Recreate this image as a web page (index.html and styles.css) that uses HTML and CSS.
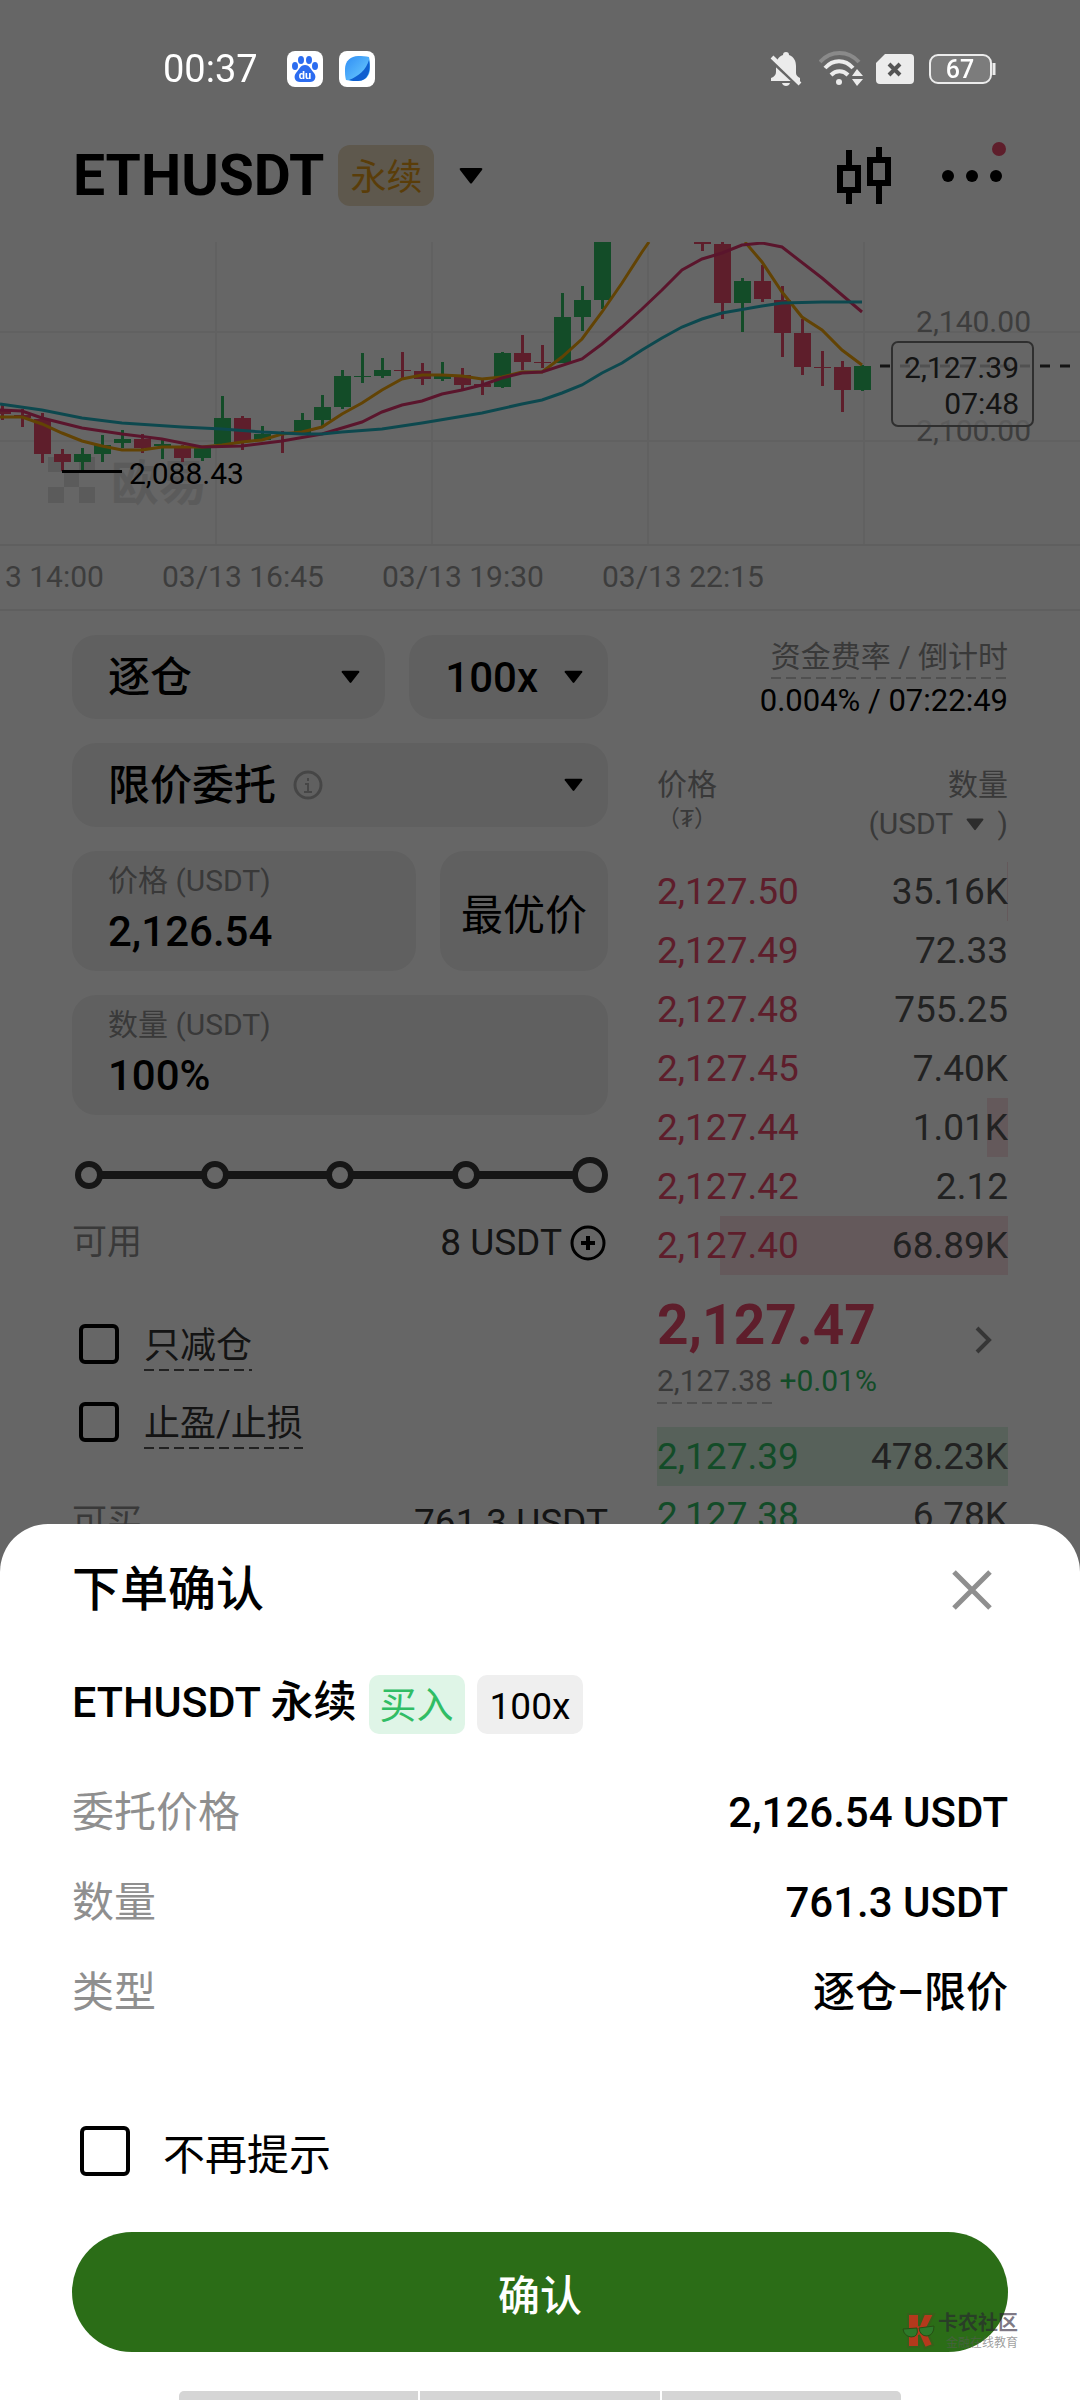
FILE: index.html
```html
<!DOCTYPE html>
<html lang="zh-CN">
<head>
    <meta charset="UTF-8">
    <meta name="viewport" content="width=device-width, initial-scale=1.0">
    <title>ETHUSDT 永续</title>
    <link rel="stylesheet" href="styles.css">
</head>
<body>
    <div class="status-bar">
        <span class="clock">00:37</span>
        <svg class="app-icon" width="36" height="36" viewBox="0 0 36 36">
            <rect width="36" height="36" rx="8" fill="#fff"/>
            <g fill="#2c6cf0">
                <ellipse cx="14" cy="9" rx="3" ry="4"/>
                <ellipse cx="22" cy="9" rx="3" ry="4"/>
                <ellipse cx="8" cy="15" rx="3" ry="4"/>
                <ellipse cx="28" cy="15" rx="3" ry="4"/>
                <path d="M18 14c-5 0-6 5-9 8-3 4-1 9 4 9h10c5 0 7-5 4-9-3-3-4-8-9-8z"/>
            </g>
            <text x="18" y="28" text-anchor="middle" class="du">du</text>
        </svg>
        <svg class="app-icon" width="36" height="36" viewBox="0 0 36 36">
            <defs>
                <linearGradient id="leaf" x1="0" y1="0" x2="1" y2="1">
                    <stop offset="0" stop-color="#2f8df5"/>
                    <stop offset="1" stop-color="#6fd0ff"/>
                </linearGradient>
            </defs>
            <rect width="36" height="36" rx="8" fill="#fff"/>
            <path d="M6 18C6 10 12 5 19 5c4 0 8 0 11 1 1 4 1 8 1 12 0 7-5 12-12 12-4 0-8 0-12-1-1-3-1-7-1-11z" fill="url(#leaf)"/>
            <path d="M10 29c10-4 17-10 20-20 2 9 0 21-11 21-4 0-6 0-9-1z" fill="#0f5fd0"/>
        </svg>
        <div class="status-right">
            <svg width="32" height="36" viewBox="0 0 32 36" fill="#ececec">
                <path d="M16 1c2 0 3 1 3 3 5 2 7 6 7 11v7q0 3 4 5v3H1v-3q5-2 5-6v-6c0-5 2-9 7-11 0-2 1-3 3-3z"/>
                <path d="M12 32h8c-1 4-7 4-8 0z"/>
                <path d="M1 9l28 26" stroke="#666" stroke-width="4"/>
                <path d="M2 6l28 27" stroke="#ececec" stroke-width="4"/>
            </svg>
            <svg class="wifi" width="44" height="36" viewBox="0 0 44 36" fill="none" stroke="#ececec" stroke-width="4">
                <path d="M1 11c11-12 28-12 39 0" stroke="#8a8a8a"/>
                <path d="M6 17c8-9 20-9 28 0"/>
                <path d="M12 24c5-5 12-5 17 0"/>
                <circle cx="20" cy="31" r="3" fill="#ececec" stroke="none"/>
                <path d="M38 18l6 7H33zM38 35l6-7H33z" fill="#ececec" stroke="none"/>
            </svg>
            <svg class="sim" width="38" height="30" viewBox="0 0 38 30">
                <path d="M9 0h25a4 4 0 0 1 4 4v22a4 4 0 0 1-4 4H4a4 4 0 0 1-4-4V9z" fill="#ececec"/>
                <path d="M13 10l11 11M24 10L13 21" stroke="#555" stroke-width="4"/>
            </svg>
            <svg width="68" height="30" viewBox="0 0 68 30">
                <rect x="1" y="1" width="61" height="28" rx="8" fill="#7c7c7c" stroke="#ececec" stroke-width="2"/>
                <path d="M65 9v12" stroke="#ececec" stroke-width="3"/>
                <text x="31" y="24" text-anchor="middle" class="battery-text">67</text>
            </svg>
        </div>
    </div>

    <div class="app">
        <header class="header">
            <h1 class="symbol">ETHUSDT</h1>
            <span class="tag-perp">永续</span>
            <svg class="arrow-lg" width="24" height="16" viewBox="0 0 24 16"><path d="M2 0h20q2 0 1 2L13 15q-1 1-2 0L1 2q-1-2 1-2z"/></svg>
            <div class="header-tools">
                <button class="icon-btn" aria-label="K线">
                    <svg width="54" height="57" viewBox="0 0 54 57" fill="none" stroke="#000" stroke-width="6">
                        <rect x="3" y="21" width="18" height="22"/>
                        <rect x="33" y="13" width="18" height="23"/>
                        <path d="M12 3v18M12 44v13M42 0v13M42 37v20"/>
                    </svg>
                </button>
                <button class="icon-btn more" aria-label="更多">
                    <svg width="60" height="12" viewBox="0 0 60 12"><circle cx="6" cy="6" r="6"/><circle cx="30" cy="6" r="6"/><circle cx="54" cy="6" r="6"/></svg>
                    <i class="dot"></i>
                </button>
            </div>
        </header>

        <svg class="chart" viewBox="0 0 1080 302">
            <path class="grid" d="M0 90H1080M0 199H1080M216 0V302M432 0V302M648 0V302M864 0V302"/>
            <g fill="#e4e4e4">
                <path d="M48 215h16v15h15v-15h16v15H79v15h16v16H79v-16H64v16H48v-16h16v-15H48z"/>
                <text x="111" y="258" class="brand">欧易</text>
            </g>
            <g id="candles"></g>
            <polyline class="ma" stroke="#f5a70a" points="0,175 22,175 42,182 62,191 82,199 102,204 122,208 142,208 162,205 202,205 222,203 242,200 262,198 282,192 302,190 322,185 342,172 362,161 382,148 402,137 422,133 442,133 462,134 482,137 502,135 522,130 542,130 562,115 582,97 602,70 622,41 642,10 649,0"/>
            <polyline class="ma" stroke="#f5a70a" points="745,0 762,20 782,50 802,75 822,88 842,108 862,123"/>
            <polyline class="ma" stroke="#e0366f" points="0,168 22,169 42,176 82,186 122,192 162,197 202,205 242,204 282,199 322,192 342,186 362,180 382,170 402,163 422,159 442,152 462,148 482,143 502,136 522,131 542,130 582,117 602,102 622,85 642,67 662,48 682,28 702,17 722,11 742,3 762,1 782,5 822,36 862,70"/>
            <polyline class="ma" stroke="#22b5c4" points="0,162 42,168 82,176 122,181 182,185 222,187 262,190 302,192 322,192 342,190 382,187 422,181 482,171 522,162 542,158 562,151 582,143 602,131 622,121 642,108 662,96 682,85 702,77 722,71 762,64 782,61 822,60 862,60"/>
            <path d="M62 229.500H122" stroke="#000" stroke-width="3"/>
            <text x="129" y="242" class="low">2,088.43</text>
            <text x="1031" y="90" class="scale">2,140.00</text>
            <text x="1031" y="199" class="scale">2,100.00</text>
            <path d="M880 124H1080" stroke="#333" stroke-width="3" stroke-dasharray="10 10"/>
            <rect x="892" y="100" width="141" height="84" rx="6" class="price-box"/>
            <text x="1019" y="136" class="now">2,127.39</text>
            <text x="1019" y="172" class="now">07:48</text>
        </svg>
        <div class="time-axis">
            <span>03/13 14:00</span>
            <span>03/13 16:45</span>
            <span>03/13 19:30</span>
            <span>03/13 22:15</span>
        </div>

        <main class="trade">
            <form class="order-form">
                <div class="row">
                    <div class="select-box mode">
                        <select aria-label="保证金模式"><option>逐仓</option></select>
                        <svg class="arrow" width="19" height="14" viewBox="0 0 24 16"><path d="M2 0h20q2 0 1 2L13 15q-1 1-2 0L1 2q-1-2 1-2z"/></svg>
                    </div>
                    <div class="select-box lever">
                        <select aria-label="杠杆"><option>100x</option></select>
                        <svg class="arrow" width="19" height="14" viewBox="0 0 24 16"><path d="M2 0h20q2 0 1 2L13 15q-1 1-2 0L1 2q-1-2 1-2z"/></svg>
                    </div>
                </div>
                <div class="select-box type">
                    <select aria-label="委托类型"><option>限价委托</option></select>
                    <svg class="info" width="30" height="30" viewBox="0 0 30 30" fill="none" stroke="#b0b0b0" stroke-width="3"><circle cx="15" cy="15" r="13"/><path d="M15 8v3M12 14h3v8M11 22h8" stroke-width="2"/></svg>
                    <svg class="arrow" width="19" height="14" viewBox="0 0 24 16"><path d="M2 0h20q2 0 1 2L13 15q-1 1-2 0L1 2q-1-2 1-2z"/></svg>
                </div>
                <div class="row">
                    <label class="field">价格 (USDT)<input type="text" value="2,126.54"></label>
                    <button type="button" class="best-btn">最优价</button>
                </div>
                <label class="field">数量 (USDT)<input type="text" value="100%"></label>
                <div class="slider">
                    <div class="ticks"><i></i><i></i><i></i><i></i><i></i></div>
                    <input type="range" min="0" max="100" step="25" value="100" aria-label="仓位比例">
                </div>
                <div class="balance avail">
                    <span>可用</span>
                    <b>8 USDT</b>
                    <button type="button" class="icon-btn" aria-label="划转">
                        <svg width="36" height="36" viewBox="0 0 36 36" fill="none" stroke="#000" stroke-width="3"><circle cx="18" cy="18" r="16"/><path d="M18 11v14M11 18h14" stroke-width="4"/></svg>
                    </button>
                </div>
                <div class="checks">
                    <label class="check"><input type="checkbox"><span class="dashed">只减仓</span></label>
                    <label class="check"><input type="checkbox"><span class="dashed">止盈/止损</span></label>
                </div>
                <div class="balance">
                    <span>可买</span>
                    <b>761.3 USDT</b>
                </div>
            </form>

            <section class="book">
                <div class="funding">
                    <span class="dashed light">资金费率 / 倒计时</span>
                    <span class="rate">0.004% / 07:22:49</span>
                </div>
                <table class="asks">
                    <thead>
                        <tr>
                            <th>价格<div class="unit">（₮）</div></th>
                            <th>数量<br>(USDT <svg width="18" height="13" viewBox="0 0 24 16" fill="#707070"><path d="M2 0h20q2 0 1 2L13 15q-1 1-2 0L1 2q-1-2 1-2z"/></svg> )</th>
                        </tr>
                    </thead>
                    <tbody>
                        <tr style="--depth: 1px"><td>2,127.50</td><td>35.16K</td></tr>
                        <tr><td>2,127.49</td><td>72.33</td></tr>
                        <tr><td>2,127.48</td><td>755.25</td></tr>
                        <tr><td>2,127.45</td><td>7.40K</td></tr>
                        <tr style="--depth: 6%"><td>2,127.44</td><td>1.01K</td></tr>
                        <tr><td>2,127.42</td><td>2.12</td></tr>
                        <tr style="--depth: 82%"><td>2,127.40</td><td>68.89K</td></tr>
                    </tbody>
                </table>
                <div class="last">
                    <div>
                        <div class="last-price">2,127.47</div>
                        <div class="mark"><span class="dashed light">2,127.38</span> <span class="up">+0.01%</span></div>
                    </div>
                    <svg class="chevron" width="20" height="28" viewBox="0 0 20 28" fill="none" stroke="#888" stroke-width="4"><path d="M3 2l12 12L3 26"/></svg>
                </div>
                <table class="bids">
                    <tbody>
                        <tr style="--depth: 100%"><td>2,127.39</td><td>478.23K</td></tr>
                        <tr><td>2,127.38</td><td>6.78K</td></tr>
                    </tbody>
                </table>
            </section>
        </main>
    </div>

    <div class="mask"></div>

    <div class="sheet" role="dialog" aria-labelledby="sheetTitle">
        <div class="sheet-head">
            <h2 id="sheetTitle">下单确认</h2>
            <button class="icon-btn close" aria-label="关闭">
                <svg width="40" height="40" viewBox="0 0 40 40" stroke="#8f8f8f" stroke-width="5"><path d="M2 2l36 36M38 2L2 38"/></svg>
            </button>
        </div>
        <div class="pair">
            <span class="pair-name">ETHUSDT 永续</span>
            <span class="tag buy">买入</span>
            <span class="tag">100x</span>
        </div>
        <dl class="detail">
            <div><dt>委托价格</dt><dd>2,126.54 USDT</dd></div>
            <div><dt>数量</dt><dd>761.3 USDT</dd></div>
            <div><dt>类型</dt><dd>逐仓–限价</dd></div>
        </dl>
        <label class="check no-remind"><input type="checkbox">不再提示</label>
        <button class="confirm">确认</button>
        <div class="home-bar"><i></i><i></i><i></i></div>
        <div class="community">
            <svg width="34" height="38" viewBox="0 0 34 38">
                <path d="M6 2h11v12l5-12h10l-8 16 7 15-8 3-6-13v12H6z" fill="#b5391c" stroke="#35611a" stroke-width="2"/>
                <path d="M1 17l14-1q2 9-6 9-7-1-8-8zM17 16l15-2q0 9-7 10-7 0-8-8z" fill="#2d7a2a" stroke="#274f14"/>
            </svg>
            <div>
                <div class="community-name">卡农社区</div>
                <div class="community-sub">金融在线教育</div>
            </div>
        </div>
    </div>

    <script>
        // [序号, 最高, 最低, 实体上, 实体下, 1涨 0跌]
        const data = [
            [0, 162, 178, 167, 172, 0], [1, 167, 185, 173, 176, 0], [2, 171, 221, 177, 212, 0],
            [3, 207, 229, 212, 220, 0], [4, 206, 229, 212, 220, 1], [5, 193, 220, 203, 212, 1],
            [6, 188, 206, 197, 201, 1], [7, 192, 211, 197, 206, 0], [8, 198, 217, 202, 204, 1],
            [9, 203, 220, 205, 216, 0], [10, 205, 219, 205, 216, 1], [11, 154, 204, 176, 202, 1],
            [12, 174, 208, 176, 200, 0], [13, 184, 199, 192, 198, 1], [14, 189, 211, 191, 192, 0],
            [15, 171, 192, 178, 191, 1], [16, 153, 184, 165, 178, 1], [17, 128, 167, 134, 165, 1],
            [18, 111, 141, 134, 135, 1], [19, 116, 136, 128, 134, 1], [20, 110, 136, 128, 129, 0],
            [21, 121, 143, 129, 137, 0], [22, 120, 139, 133, 137, 1], [23, 126, 148, 133, 143, 0],
            [24, 138, 153, 142, 145, 0], [25, 110, 146, 111, 145, 1], [26, 93, 128, 111, 120, 0],
            [27, 103, 126, 120, 121, 0], [28, 51, 121, 75, 121, 1], [29, 44, 89, 58, 75, 1],
            [30, 0, 67, 0, 58, 1], [35, 0, 9, 0, 2, 0], [36, 0, 77, 2, 61, 0],
            [37, 36, 90, 39, 61, 1], [38, 23, 60, 39, 57, 0], [39, 44, 115, 58, 91, 0],
            [40, 77, 133, 91, 125, 0], [41, 109, 144, 125, 126, 0], [42, 119, 170, 125, 148, 0],
            [43, 123, 149, 124, 148, 1]
        ];
        document.getElementById('candles').innerHTML = data.map(([n, high, low, top, bottom, up]) => {
            const x = 2 + n * 20;
            return `<g class="${up ? 'rise' : 'fall'}">
                <rect x="${x - 1}" y="${high}" width="3" height="${low - high}"/>
                <rect x="${x - 8}" y="${top}" width="17" height="${bottom - top}"/>
            </g>`;
        }).join('');
    </script>
</body>
</html>
```

FILE: styles.css
```css
* {
    box-sizing: border-box;
}
body {
    margin: 0;
    background-color: #fff;
    color: #000;
    font-family: Roboto, "Noto Sans CJK SC", sans-serif;
    font-size: 36px;
}
h1, h2, dl, dd {
    margin: 0;
}
button, input, select {
    font-family: inherit;
    color: inherit;
}
svg {
    display: block;
}
.icon-btn {
    position: relative;
    padding: 0;
    border: none;
    background: none;
    cursor: pointer;
}

/* 状态栏 */
.status-bar {
    position: fixed;
    top: 0;
    left: 0;
    right: 0;
    z-index: 3;
    display: flex;
    align-items: center;
    height: 138px;
    padding: 0 83px 0 163px;
    color: #fff;
}
.clock {
    font-size: 38px;
    margin-right: 29px;
}
.app-icon {
    margin-right: 16px;
}
.du {
    font-size: 11px;
    font-weight: 700;
    fill: #fff;
}
.status-right {
    display: flex;
    align-items: center;
    margin-left: auto;
}
.wifi {
    margin-left: 17px;
}
.sim {
    margin: 0 15px 0 13px;
}
.battery-text {
    font-size: 25px;
    font-weight: 500;
    fill: #fff;
}

.app {
    height: 100vh;
    padding-top: 138px;
    overflow: hidden;
}
.header {
    display: flex;
    align-items: center;
    height: 104px;
    padding: 0 78px 29px 73px;
}
.symbol {
    font-size: 57px;
    line-height: 75px;
    font-weight: 700;
}
.tag-perp {
    height: 61px;
    margin: 0 25px 0 14px;
    padding: 0 12px;
    border-radius: 12px;
    background-color: #eadcc0;
    color: #e09a18;
    line-height: 66px;
}
.header-tools {
    display: flex;
    align-items: center;
    gap: 51px;
    margin-left: auto;
}
.dot {
    position: absolute;
    top: -28px;
    right: -4px;
    width: 14px;
    height: 14px;
    border-radius: 50%;
    background-color: #eb4b6d;
}

/* K线 */
.chart {
    width: 100%;
    font-size: 30px;
}
.grid {
    fill: none;
    stroke: #f3f3f3;
    stroke-width: 2;
}
.rise {
    fill: #31bd65;
}
.fall {
    fill: #eb4b6d;
}
.ma {
    fill: none;
    stroke-width: 3;
}
.brand {
    font-size: 48px;
    font-weight: 700;
}
.scale {
    text-anchor: end;
    fill: #9a9a9a;
}
.price-box {
    fill: rgba(255, 255, 255, 0.75);
    stroke: #777;
    stroke-width: 2;
}
.now {
    text-anchor: end;
    fill: #333;
}
.time-axis {
    display: flex;
    gap: 58px;
    height: 67px;
    padding-bottom: 2px;
    overflow: hidden;
    border-top: 2px solid #eee;
    border-bottom: 2px solid #eee;
    color: #9a9a9a;
    font-size: 30px;
    line-height: 62px;
    white-space: nowrap;
}
.time-axis span {
    flex: none;
}
.time-axis span:first-child {
    margin-left: -58px;
}

/* 下单区 */
.trade {
    display: grid;
    grid-template-columns: minmax(0, 1fr) 351px;
    gap: 49px;
    padding: 24px 72px 0;
}
.order-form {
    display: flex;
    flex-direction: column;
    gap: 24px;
}
.row {
    display: flex;
    gap: 24px;
}
.select-box {
    display: flex;
    align-items: center;
    height: 84px;
    padding: 0 25px 0 36px;
    border-radius: 24px;
    background-color: #f1f1f1;
}
.mode {
    flex: 11;
}
.lever {
    flex: 6;
}
.select-box select {
    padding: 0;
    border: none;
    background: none;
    appearance: none;
    font-size: 42px;
    font-weight: 500;
}
.info {
    margin-left: 16px;
}
.arrow {
    margin-left: auto;
}
.field {
    flex: 1;
    min-width: 0;
    height: 120px;
    padding: 10px 36px;
    border-radius: 24px;
    background-color: #f1f1f1;
    color: #8f8f8f;
    font-size: 30px;
    line-height: 40px;
}
.order-form > .field {
    flex: none;
}
.field input {
    display: block;
    width: 100%;
    height: 60px;
    padding: 0;
    border: none;
    background: none;
    color: #000;
    font-size: 42px;
    font-weight: 500;
}
.best-btn {
    width: 168px;
    padding: 0;
    border: none;
    border-radius: 24px;
    background-color: #f1f1f1;
    font-size: 42px;
}
.slider {
    position: relative;
    height: 36px;
    margin-top: 18px;
}
.slider::before {
    content: "";
    position: absolute;
    top: 14px;
    left: 17px;
    right: 17px;
    height: 8px;
    background-color: #383838;
}
.ticks {
    position: absolute;
    inset: 4px 3px;
    display: flex;
    justify-content: space-between;
}
.ticks i {
    width: 28px;
    height: 28px;
    border: 6px solid #383838;
    border-radius: 50%;
    background-color: #fff;
}
.slider input {
    position: absolute;
    inset: 0;
    width: 100%;
    height: 36px;
    margin: 0;
    background: none;
    appearance: none;
}
.slider input::-webkit-slider-thumb {
    width: 36px;
    height: 36px;
    border: 6px solid #383838;
    border-radius: 50%;
    background-color: #fff;
    appearance: none;
}
.balance {
    display: flex;
    align-items: center;
    height: 44px;
    line-height: 44px;
}
.balance span {
    margin-right: auto;
    color: #8f8f8f;
    font-size: 35px;
}
.balance b {
    color: #333;
    font-size: 37px;
    font-weight: 400;
}
.avail {
    margin-top: 4px;
    padding-right: 2px;
}
.avail button {
    margin-left: 8px;
}
.checks {
    display: flex;
    flex-direction: column;
    gap: 24px;
    margin: 28px 0;
}
.check {
    display: flex;
    align-items: center;
}
.check input {
    width: 40px;
    height: 40px;
    margin: 0 25px 0 7px;
    border: 4px solid #000;
    border-radius: 6px;
    appearance: none;
}
.checks span {
    height: 54px;
    color: #333;
    line-height: 58px;
}
.dashed {
    background: repeating-linear-gradient(90deg, #555 0 10px, transparent 10px 15px) left bottom / 100% 2px no-repeat;
}
.dashed.light {
    background-image: repeating-linear-gradient(90deg, #c8c8c8 0 10px, transparent 10px 15px);
    color: #8f8f8f;
}

/* 盘口 */
.book {
    font-size: 30px;
}
.funding {
    display: flex;
    flex-direction: column;
    align-items: flex-end;
    line-height: 44px;
}
.rate {
    font-size: 31px;
}
.book table {
    width: 100%;
    border-collapse: collapse;
}
.asks {
    margin-top: 42px;
}
th {
    padding: 0 0 19px;
    color: #8f8f8f;
    font-weight: 400;
    line-height: 39px;
    text-align: left;
    vertical-align: top;
}
th svg {
    display: inline-block;
    margin: 0 6px;
    vertical-align: 3px;
}
.unit {
    font-size: 23px;
    line-height: 32px;
}
th:last-child, td:last-child {
    text-align: right;
}
tbody tr {
    background: linear-gradient(#fbdfe4, #fbdfe4) right / var(--depth, 0) 100% no-repeat;
}
.bids tr {
    background-image: linear-gradient(#d9f3e1, #d9f3e1);
}
td {
    height: 59px;
    padding: 0;
    color: #555;
    font-size: 37px;
    line-height: 59px;
}
td:first-child {
    color: #eb4b6d;
}
.bids td:first-child {
    color: #31bd65;
}
.last {
    display: flex;
    align-items: flex-start;
    justify-content: space-between;
    padding: 20px 14px 23px 0;
}
.chevron {
    margin-top: 31px;
}
.last-price {
    color: #eb4b6d;
    font-size: 55px;
    font-weight: 700;
    line-height: 60px;
}
.mark {
    margin-top: 3px;
    line-height: 46px;
}
.mark .dashed {
    display: inline-block;
}
.up {
    color: #31bd65;
}

.mask {
    position: fixed;
    inset: 0;
    z-index: 1;
    background-color: rgba(0, 0, 0, 0.6);
}

/* 确认弹层 */
.sheet {
    position: fixed;
    left: 0;
    right: 0;
    bottom: 0;
    z-index: 2;
    padding: 38px 72px 0;
    border-radius: 48px 48px 0 0;
    background-color: #fff;
    font-size: 42px;
}
.sheet-head {
    display: flex;
    align-items: center;
    justify-content: space-between;
    height: 56px;
    padding-right: 16px;
}
.sheet-head h2 {
    font-size: 48px;
    font-weight: 500;
    line-height: 52px;
}
.pair {
    display: flex;
    align-items: center;
    gap: 12px;
    height: 59px;
    margin-top: 57px;
    font-weight: 500;
}
.pair-name {
    height: 59px;
    font-size: 43px;
    line-height: 55px;
}
.tag {
    height: 59px;
    padding: 0 13px;
    border-radius: 10px;
    background-color: #efefef;
    font-size: 37px;
    font-weight: 400;
    line-height: 63px;
}
.buy {
    padding: 0 11px;
    background-color: #dff5e7;
    color: #31bd65;
}
.detail {
    margin-top: 34px;
}
.detail div {
    display: flex;
    justify-content: space-between;
    line-height: 90px;
}
.detail dt {
    color: #8f8f8f;
}
.detail dd {
    font-weight: 500;
}
.no-remind {
    height: 50px;
    margin-top: 88px;
}
.no-remind input {
    width: 50px;
    height: 50px;
    margin: 0 33px 0 8px;
}
.confirm {
    display: block;
    width: 100%;
    height: 120px;
    margin-top: 56px;
    border: none;
    border-radius: 60px;
    background-color: #2b6d17;
    color: #fff;
    font-size: 42px;
    font-weight: 500;
    cursor: pointer;
}
.home-bar {
    display: flex;
    gap: 2px;
    height: 9px;
    margin: 39px 107px 0;
    overflow: hidden;
    border-radius: 5px 5px 0 0;
}
.home-bar i {
    flex: 1;
    background-color: #d5d5d5;
}
/* 右下角社区水印，压在按钮上 */
.community {
    position: absolute;
    right: 62px;
    bottom: 50px;
    display: flex;
    align-items: center;
    gap: 2px;
    line-height: 1;
}
.community-name {
    color: rgba(40, 30, 50, 0.6);
    font-size: 20px;
    font-weight: 700;
}
.community-sub {
    margin-top: 4px;
    color: rgba(90, 90, 90, 0.6);
    font-size: 12px;
    text-align: right;
}
```
